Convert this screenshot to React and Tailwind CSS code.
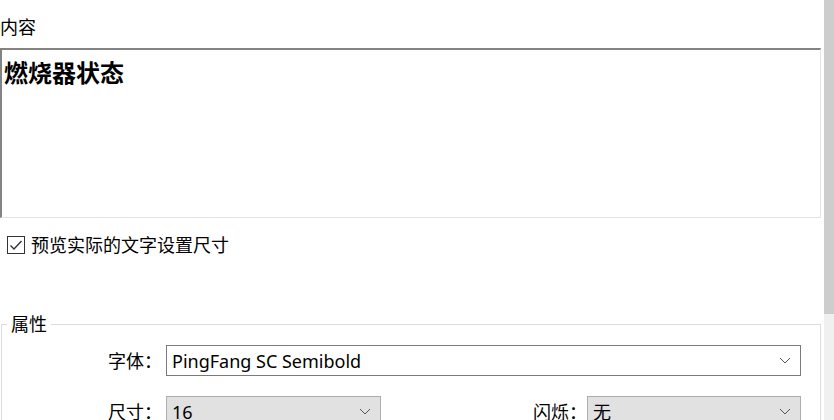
import React from "react";

const Chevron = () => (
  <svg width="12" height="7" viewBox="0 0 12 7" className="shrink-0">
    <path d="M1 1l5 5 5-5" fill="none" stroke="#555" strokeWidth="1" />
  </svg>
);

function Select({ value, className = "", disabled }) {
  return (
    <div
      className={`flex h-[31px] shrink-0 items-center justify-between pl-[5px] pr-[9px] text-[18px] ${
        disabled ? "bg-[#e1e1e1] border border-[#adadad]" : "bg-white border border-[#7a7a7a]"
      } ${className}`}
    >
      <span className="text-black leading-[22px]">{value}</span>
      <Chevron />
    </div>
  );
}

export default function App() {
  return (
    <div
      className="relative flex h-[420px] w-[834px] overflow-hidden bg-white text-black"
      style={{ fontFamily: '"Noto Sans", "Noto Sans CJK SC", sans-serif' }}
    >
      <div className="flex w-[824px] shrink-0 flex-col">
        <div className="shrink-0 pt-[16px] pl-0 text-[18px] leading-[22px]">内容</div>
        <div className="mt-[10px] h-[170px] w-[821px] shrink-0 border-t-2 border-l-2 border-b border-r border-t-[#838383] border-l-[#838383] border-b-[#e3e3e3] border-r-[#e3e3e3] px-[2px] pt-[9px]">
          <div className="text-[24px] font-bold leading-[28px]">燃烧器状态</div>
        </div>
        <label className="mt-[17px] ml-[7px] flex h-[20px] shrink-0 items-center gap-[6px] text-[18px] leading-[20px]">
          <span className="flex h-[18px] w-[18px] items-center justify-center border border-[#333] bg-white">
            <svg width="14" height="12" viewBox="0 0 14 12">
              <path d="M1.5 6.5l3.5 3.5 7.5-8" fill="none" stroke="#333" strokeWidth="1.4" />
            </svg>
          </span>
          预览实际的文字设置尺寸
        </label>
        <fieldset className="mt-[59px] ml-[1px] w-[820px] shrink-0 border border-[#dcdcdc] px-0 pb-4">
          <legend className="ml-[5px] px-[4px] text-[18px] leading-[20px]">属性</legend>
          <div className="mt-[11px] flex items-center">
            <span className="w-[160px] text-right text-[18px] leading-[22px]">字体：</span>
            <Select value="PingFang SC Semibold" className="ml-[4px] w-[635px]" />
          </div>
          <div className="mt-[20px] flex items-center">
            <span className="w-[160px] text-right text-[18px] leading-[22px]">尺寸：</span>
            <Select value="16" disabled className="ml-[4px] w-[215px]" />
            <span className="w-[206px] text-right text-[18px] leading-[22px]">闪烁：</span>
            <Select value="无" disabled className="w-[214px]" />
          </div>
        </fieldset>
      </div>
      <div className="flex w-[10px] flex-col bg-[#f0f0f0]">
        <div className="h-[314px] bg-[#cdcdcd]" />
      </div>
    </div>
  );
}
